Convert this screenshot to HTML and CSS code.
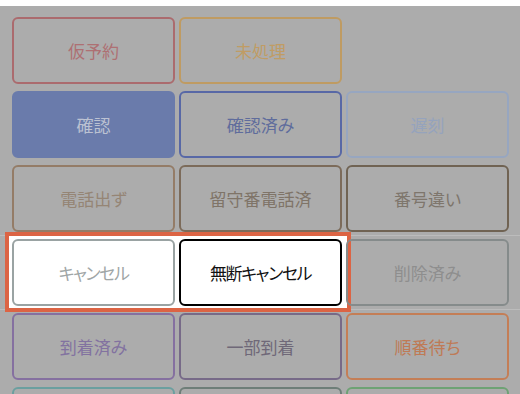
FILE: index.html
```html
<!DOCTYPE html>
<html lang="ja">
<head>
<meta charset="utf-8">
<title>ステータス選択</title>
<link rel="stylesheet" href="styles.css">
</head>
<body>
<div class="topbar"></div>
<div class="grid">
  <div class="row">
    <div class="btn c-red">仮予約</div>
    <div class="btn c-gold">未処理</div>
  </div>
  <div class="row">
    <div class="btn c-blue-fill">確認</div>
    <div class="btn c-blue">確認済み</div>
    <div class="btn c-lightblue">遅刻</div>
  </div>
  <div class="row">
    <div class="btn c-brown">電話出ず</div>
    <div class="btn c-darkbrown">留守番電話済</div>
    <div class="btn c-darkerbrown">番号違い</div>
  </div>
  <div class="row sel">
    <div class="spot">
      <div class="btn c-cancel kana">キャンセル</div>
      <div class="btn c-noshow kana">無断キャンセル</div>
    </div>
    <div class="btn c-gray">削除済み</div>
  </div>
  <div class="row">
    <div class="btn c-purple">到着済み</div>
    <div class="btn c-darkpurple">一部到着</div>
    <div class="btn c-orange">順番待ち</div>
  </div>
  <div class="row">
    <div class="btn c-teal"></div>
    <div class="btn c-slate"></div>
    <div class="btn c-green"></div>
  </div>
</div>
</body>
</html>
```

FILE: styles.css
```css
html, body {
  margin: 0;
  height: 100%;
  overflow: hidden;
}
body {
  background: #acacac;
  font-family: "Noto Sans CJK JP", "Noto Sans", sans-serif;
}
.topbar {
  height: 6px;
  background: #ffffff;
}
.grid {
  display: flex;
  flex-direction: column;
  gap: 7px;
  padding-top: 11px;
}
.row {
  display: flex;
  gap: 4px;
  align-items: flex-start;
  padding-left: 12px;
}
.row.sel {
  margin: -4px 0;
  padding-top: 3px;
  padding-bottom: 3px;
  border-top: 1px solid #bcbcbc;
  border-bottom: 1px solid #bcbcbc;
}
.spot {
  display: flex;
  gap: 4px;
  margin: -7px -9px -6px -7px;
  padding: 3px 5px 2px 3px;
  border: 4px solid #dc6444;
  background: #ffffff;
}
.btn {
  box-sizing: border-box;
  width: 163px;
  height: 67px;
  border: 2px solid;
  border-radius: 6px;
  display: flex;
  align-items: center;
  justify-content: center;
  font-size: 17px;
  font-feature-settings: "palt";
  white-space: nowrap;
}
.kana {
  letter-spacing: -1.4px;
}
.c-red { border-color: #ab6b6e; color: #ae7073; }
.c-gold { border-color: #bf9b62; color: #c09c64; }
.c-blue-fill { background: #6a7bab; border-color: #6a7bab; color: #bcc2d2; }
.c-blue { border-color: #5868a6; color: #5f6c9c; }
.c-lightblue { border-color: #97a6c0; color: #95a3bd; }
.c-brown { border-color: #947c67; color: #958575; }
.c-darkbrown { border-color: #7c6b5a; color: #7f7468; }
.c-darkerbrown { border-color: #706353; color: #7e766c; }
.c-cancel { background: #ffffff; border-color: #9aa3a3; color: #a0a6a6; }
.c-noshow { background: #ffffff; border-color: #000000; color: #111111; }
.c-gray { border-color: #858b8b; color: #8e8e8e; }
.c-purple { border-color: #8570a0; color: #8272a0; }
.c-darkpurple { border-color: #776a88; color: #6f6878; }
.c-orange { border-color: #c47e56; color: #bf7a55; }
.c-teal { border-color: #6b9f9f; }
.c-slate { border-color: #6e7e78; }
.c-green { border-color: #6ea274; }
```
